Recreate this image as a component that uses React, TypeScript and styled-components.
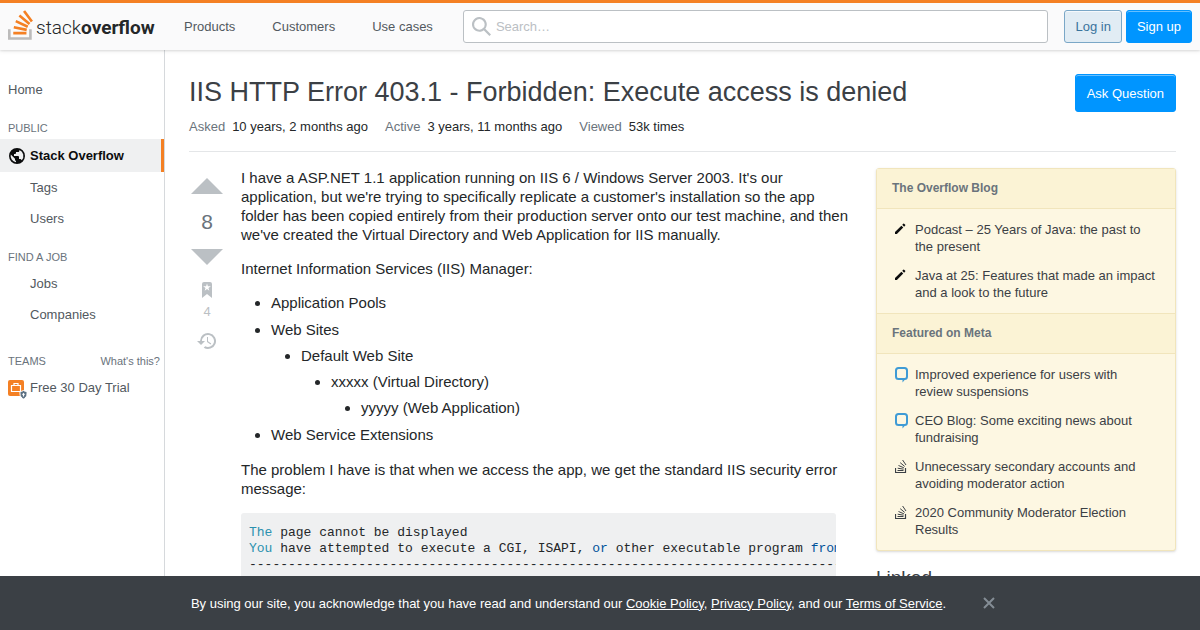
import React from "react";
import styled, { createGlobalStyle, css } from "styled-components";

const sans = `"Liberation Sans", Arial, sans-serif`;
const mono = `"Liberation Mono", "Courier New", monospace`;

const GlobalStyle = createGlobalStyle`
  *, *::before, *::after { box-sizing: border-box; }
  body {
    margin: 0;
    background: #fff;
    color: #242729;
    font-family: ${sans};
    font-size: 13px;
    line-height: 17px;
  }
  a { color: inherit; text-decoration: none; }
  svg { display: block; flex: none; }
  button { font-family: inherit; cursor: pointer; }
`;

const Page = styled.div`
  display: flex;
  flex-direction: column;
  min-height: 100vh;
`;

const TopBar = styled.header`
  position: sticky;
  top: 0;
  z-index: 10;
  display: flex;
  align-items: center;
  height: 50px;
  padding: 0 8px;
  background: #fafafb;
  border-top: 3px solid #f48024;
  box-shadow: 0 1px 2px rgba(12, 13, 14, 0.1), 0 1px 5px rgba(12, 13, 14, 0.08);
`;

const Logo = styled.a`
  display: flex;
  align-items: center;
  gap: 3px;
  width: 160px;
  padding-bottom: 3px;
  font-family: Roboto, ${sans};
  font-size: 19px;
  font-weight: 300;
  line-height: 24px;
  color: #242729;
  strong { font-weight: 700; }
`;

const LogoText = styled.span`
  padding-top: 5px;
  white-space: nowrap;
`;

const TopNav = styled.nav`
  display: flex;
  gap: 5px;
  a { padding: 8px 16px; color: #525960; white-space: nowrap; }
`;

const SearchForm = styled.form`
  display: flex;
  align-items: center;
  flex: 1;
  gap: 5px;
  height: 33px;
  margin: 0 16px 0 14px;
  padding: 0 8px;
  background: #fff;
  border: 1px solid #bbc0c4;
  border-radius: 3px;
  color: #bbc0c4;
`;

const SearchInput = styled.input`
  flex: 1;
  min-width: 0;
  padding: 0;
  border: 0;
  outline: 0;
  background: transparent;
  font: 13px/17px ${sans};
  &::placeholder { color: #bbc0c4; opacity: 1; }
`;

const Actions = styled.div`
  display: flex;
  gap: 4px;
`;

const Button = styled.button<{ $kind: "filled" | "primary"; $tall?: boolean }>`
  flex: none;
  height: ${(p) => (p.$tall ? 38 : 33)}px;
  padding: 0 ${(p) => (p.$tall ? 11 : 10)}px;
  border-radius: 3px;
  font-size: 13px;
  line-height: 17px;
  white-space: nowrap;
  ${(p) =>
    p.$kind === "primary"
      ? css`
          color: #fff;
          background: #0095ff;
          border: 1px solid #0095ff;
          box-shadow: inset 0 1px 0 rgba(255, 255, 255, 0.4);
        `
      : css`
          color: #39739d;
          background: #e1ecf4;
          border: 1px solid #7aa7c7;
          box-shadow: inset 0 1px 0 rgba(255, 255, 255, 0.7);
        `}
`;

const Body = styled.div`
  display: flex;
  flex: 1;
`;

const SideNav = styled.nav`
  flex: none;
  width: 165px;
  padding-top: 24px;
  border-right: 1px solid #d6d9dc;
  color: #525960;
`;

const NavHeading = styled.div<{ $far?: boolean }>`
  display: flex;
  justify-content: space-between;
  margin: ${(p) => (p.$far ? 23 : 15)}px 0 3px;
  padding: 0 4px 0 8px;
  font-size: 11px;
  line-height: 16px;
  color: #6a737c;
`;

const NavLink = styled.a<{ $indent?: boolean; $active?: boolean }>`
  display: flex;
  align-items: center;
  gap: 4px;
  height: 31px;
  padding-left: ${(p) => (p.$indent ? 30 : 8)}px;
  ${(p) =>
    p.$active &&
    css`
      height: 33px;
      background: #eff0f1;
      border-right: 3px solid #f48024;
      color: #0c0d0e;
      font-weight: 700;
    `}
`;

const Content = styled.main`
  flex: 1;
  min-width: 0;
  padding: 24px 24px 0;
`;

const QuestionHeader = styled.div`
  display: flex;
  justify-content: space-between;
  align-items: flex-start;
`;

const Title = styled.h1`
  margin: 0;
  font-size: 27px;
  font-weight: 400;
  line-height: 36px;
  color: #3b4045;
`;

const Stats = styled.dl`
  display: flex;
  gap: 17px;
  margin: 6px 0 16px;
  padding-bottom: 16px;
  border-bottom: 1px solid #e4e6e8;
  div { display: flex; gap: 7px; }
  dt { color: #6a737c; }
  dd { margin: 0; }
`;

const Columns = styled.div`
  display: flex;
  gap: 40px;
`;

const Post = styled.article`
  display: flex;
  flex: 1;
  min-width: 0;
  gap: 16px;
`;

const Votes = styled.div`
  display: flex;
  flex-direction: column;
  align-items: center;
  flex: none;
  width: 36px;
  color: #bbc0c4;
`;

const IconButton = styled.button`
  display: block;
  padding: 0;
  border: 0;
  background: none;
  color: inherit;
`;

const Score = styled.span`
  font-size: 21px;
  line-height: 35px;
  color: #6a737c;
`;

const Bookmark = styled(IconButton)`
  display: flex;
  flex-direction: column;
  align-items: center;
  gap: 4px;
  padding: 6px 0 12px;
  font-size: 13px;
  line-height: 17px;
`;

const Prose = styled.div`
  flex: 1;
  min-width: 0;
  font-size: 15px;
  line-height: 19px;
  p { margin: 0 -16px 15px 0; }
`;

const List = styled.ul`
  margin: 0 0 16px;
  padding-left: 30px;
  list-style: disc;
  li + li { margin-top: 8px; }
  ul { margin: 7px 0 0; }
`;

const Code = styled.pre`
  margin: 0;
  padding: 12px 8px;
  overflow: hidden;
  border-radius: 3px;
  background: #eff0f1;
  font-family: ${mono};
  font-size: 13px;
  line-height: 16px;
  color: #242729;
`;

const CodeWord = styled.span<{ $type?: boolean }>`
  color: ${(p) => (p.$type ? "#2b91af" : "#00529a")};
`;

const Aside = styled.aside`
  flex: none;
  width: 300px;
`;

const Card = styled.div`
  border: 1px solid #f1e5bc;
  border-radius: 3px;
  background: #fdf7e2;
  box-shadow: 0 1px 2px rgba(12, 13, 14, 0.1), 0 1px 4px rgba(12, 13, 14, 0.06);
  color: #3b4045;
`;

const CardHeading = styled.h2`
  margin: 0;
  padding: 11px 15px;
  border-bottom: 1px solid #f1e5bc;
  background: #fbf3d5;
  font-size: 12px;
  line-height: 17px;
  color: #6a737c;
  ul + & { border-top: 1px solid #f1e5bc; }
`;

const CardList = styled.ul`
  display: grid;
  gap: 12px;
  margin: 0;
  padding: 12px 18px;
  list-style: none;
`;

const CardItem = styled.li`
  display: grid;
  grid-template-columns: 14px 1fr;
  gap: 6px;
`;

const Linked = styled.h2`
  margin: 15px 0 0;
  font-size: 19px;
  font-weight: 400;
  line-height: 24px;
  color: #3b4045;
`;

const CookieBar = styled.div`
  position: fixed;
  right: 0;
  bottom: 0;
  left: 0;
  z-index: 20;
  display: flex;
  align-items: center;
  justify-content: center;
  gap: 23px;
  height: 54px;
  background: #3b4045;
  color: #fff;
  a { text-decoration: underline; }
`;

const Close = styled(IconButton)`
  display: flex;
  justify-content: center;
  width: 40px;
  color: #848d95;
`;

const LogoIcon = () => (
  <svg width="25" height="30" viewBox="22.6 14.9 73.2 86.6">
    <path fill="#bcbbbb" d="M84.4 93.8V70.6h7.7v30.9H22.6V70.6h7.7v23.2z" />
    <path
      fill="#f48024"
      d="M38.8 68.4l37.8 7.9 1.6-7.6-37.8-7.9-1.6 7.6zM43.8 50.4l35 16.3 3.2-7-35-16.4-3.2 7.1zM53.5 33.2l29.7 24.7 4.9-5.9-29.7-24.7-4.9 5.9zM72.7 14.9l-6.2 4.6 23 31 6.2-4.6-23-31zM38 86h38.6v-7.7H38V86z"
    />
  </svg>
);

const StackIcon = () => (
  <svg width="14" height="16" viewBox="0 0 14 16" fill="none" stroke="#3b4045" strokeWidth="1">
    <path d="M.5 10v4.500h10V10" strokeWidth="1.200" />
    <path d="M2.500 12.500h6M2.700 10.200l5.900 1M3.500 7.500l5.400 2.300M5.200 4.700l4.500 3.700M7.600 2l3.400 5" />
  </svg>
);

const PencilIcon = () => (
  <svg width="14" height="14" viewBox="2 -1 14 14" fill="#0c0d0e">
    <path d="M11.1 1.71l1.13 1.12c.2.2.2.51 0 .71L11.1 4.7 9.21 2.86l1.17-1.15c.2-.2.51-.2.71 0zM2 10.12l6.37-6.43 1.88 1.88L3.88 12H2v-1.88z" />
  </svg>
);

const MetaIcon = () => (
  <svg width="14" height="17" viewBox="0 -1 14 17">
    <rect x="1" y="1" width="11" height="11" rx="2.500" fill="none" stroke="#3f9bd5" strokeWidth="2" />
    <path d="M6 12h4.500L7.500 15.500V13z" fill="#3f9bd5" />
  </svg>
);

const blogPosts = [
  "Podcast – 25 Years of Java: the past to the present",
  "Java at 25: Features that made an impact and a look to the future",
];

const metaPosts = [
  { icon: <MetaIcon />, text: "Improved experience for users with review suspensions" },
  { icon: <MetaIcon />, text: "CEO Blog: Some exciting news about fundraising" },
  { icon: <StackIcon />, text: "Unnecessary secondary accounts and avoiding moderator action" },
  { icon: <StackIcon />, text: "2020 Community Moderator Election Results" },
];

export default function App() {
  return (
    <Page>
      <GlobalStyle />
      <TopBar>
        <Logo href="#" aria-label="Stack Overflow">
          <LogoIcon />
          <LogoText>
            stack<strong>overflow</strong>
          </LogoText>
        </Logo>
        <TopNav>
          <a href="#">Products</a>
          <a href="#">Customers</a>
          <a href="#">Use cases</a>
        </TopNav>
        <SearchForm role="search">
          <svg width="19" height="19" viewBox="0 0 18 18" fill="currentColor">
            <path d="M18 16.500l-5.140-5.180h-.35a7 7 0 10-1.190 1.190v.35L16.500 18l1.500-1.500zM12 7A5 5 0 112 7a5 5 0 0110 0z" />
          </svg>
          <SearchInput type="text" placeholder="Search…" aria-label="Search" />
        </SearchForm>
        <Actions>
          <Button $kind="filled">Log in</Button>
          <Button $kind="primary">Sign up</Button>
        </Actions>
      </TopBar>

      <Body>
        <SideNav>
          <NavLink href="#">Home</NavLink>
          <NavHeading>PUBLIC</NavHeading>
          <NavLink href="#" $active>
            <svg width="18" height="18" viewBox="0 0 18 18" fill="currentColor">
              <path d="M9 1a8 8 0 100 16A8 8 0 009 1zM8 15.320a6.460 6.460 0 01-4.300-2.740 6.460 6.460 0 01-.93-5.010L7 11.680v.8c0 .88.12 1.320 1 1.320v1.520zm5.720-2c-.2-.66-1-1.320-1.720-1.320h-1v-2c0-.44-.56-1-1-1H6V7h1c.44 0 1-.56 1-1V5h2c.88 0 1.400-.72 1.400-1.600v-.33a6.450 6.450 0 013.830 4.510 6.450 6.450 0 01-1.510 5.730v.01z" />
            </svg>
            Stack Overflow
          </NavLink>
          <NavLink href="#" $indent>Tags</NavLink>
          <NavLink href="#" $indent>Users</NavLink>
          <NavHeading>FIND A JOB</NavHeading>
          <NavLink href="#" $indent>Jobs</NavLink>
          <NavLink href="#" $indent>Companies</NavLink>
          <NavHeading $far>
            TEAMS <a href="#">What's this?</a>
          </NavHeading>
          <NavLink href="#">
            <svg width="18" height="18" viewBox="0 0 18 18" overflow="visible">
              <rect y="1" width="16" height="16" rx="2" fill="#f48024" />
              <path d="M3.500 6.500h9v6h-9zM6 6V4.500h4V6" fill="none" stroke="#fff" strokeWidth="1.200" />
              <path
                d="M12 12.500c1.200 0 2.500-.3 3.500-1 1 .7 2.300 1 3.500 1V15c0 2.500-1.500 4-3.500 5-2-1-3.500-2.500-3.500-5z"
                fill="#5b7083"
                stroke="#fff"
              />
              <path d="M14.900 17.500v-1.700h-1.100l1.700-2 1.700 2h-1.100v1.700z" fill="#fff" />
            </svg>
            Free 30 Day Trial
          </NavLink>
        </SideNav>

        <Content>
          <QuestionHeader>
            <Title>IIS HTTP Error 403.1 - Forbidden: Execute access is denied</Title>
            <Button $kind="primary" $tall>Ask Question</Button>
          </QuestionHeader>
          <Stats>
            <div><dt>Asked</dt><dd>10 years, 2 months ago</dd></div>
            <div><dt>Active</dt><dd>3 years, 11 months ago</dd></div>
            <div><dt>Viewed</dt><dd>53k times</dd></div>
          </Stats>

          <Columns>
            <Post>
              <Votes>
                <IconButton aria-label="Up vote">
                  <svg width="36" height="36" viewBox="0 0 36 36" fill="currentColor">
                    <path d="M2 26h32L18 10 2 26z" />
                  </svg>
                </IconButton>
                <Score>8</Score>
                <IconButton aria-label="Down vote">
                  <svg width="36" height="36" viewBox="0 0 36 36" fill="currentColor">
                    <path d="M2 10h32L18 26 2 10z" />
                  </svg>
                </IconButton>
                <Bookmark aria-label="Bookmark">
                  <svg width="18" height="18" viewBox="0 0 18 18" fill="currentColor" fillRule="evenodd">
                    <path d="M6 1a2 2 0 00-2 2v14l5-4 5 4V3a2 2 0 00-2-2H6zm3.900 4.230h3l-2.450 1.700.9 2.870L9 8.090l-2.350 1.710.9-2.870-2.450-1.700h3L9 2.460l.9 2.770z" />
                  </svg>
                  4
                </Bookmark>
                <IconButton aria-label="Show activity">
                  <svg width="20" height="18" viewBox="0 0 20 18" fill="currentColor">
                    <path d="M3 9a8 8 0 113.730 6.770L8.200 14.300A6 6 0 105 9l3.010-.01-4 4-4-4h3L3 9zm7-4h1.010L11 9.360l3.220 2.100-.6.93L10 10V5z" />
                  </svg>
                </IconButton>
              </Votes>
              <Prose>
                <p>
                  I have a ASP.NET 1.1 application running on IIS 6 / Windows Server 2003. It's our
                  application, but we're trying to specifically replicate a customer's installation so the app
                  folder has been copied entirely from their production server onto our test machine, and then
                  we've created the Virtual Directory and Web Application for IIS manually.
                </p>
                <p>Internet Information Services (IIS) Manager:</p>
                <List>
                  <li>Application Pools</li>
                  <li>
                    Web Sites
                    <List>
                      <li>
                        Default Web Site
                        <List>
                          <li>
                            xxxxx (Virtual Directory)
                            <List>
                              <li>yyyyy (Web Application)</li>
                            </List>
                          </li>
                        </List>
                      </li>
                    </List>
                  </li>
                  <li>Web Service Extensions</li>
                </List>
                <p>The problem I have is that when we access the app, we get the standard IIS security error message:</p>
                <Code>
                  <CodeWord $type>The</CodeWord>
                  {" page cannot be displayed\n"}
                  <CodeWord $type>You</CodeWord>
                  {" have attempted to execute a CGI, ISAPI, "}
                  <CodeWord>or</CodeWord>
                  {" other executable program "}
                  <CodeWord>from</CodeWord>
                  {"\n"}
                  {"-".repeat(78)}
                </Code>
              </Prose>
            </Post>

            <Aside>
              <Card>
                <CardHeading>The Overflow Blog</CardHeading>
                <CardList>
                  {blogPosts.map((text) => (
                    <CardItem key={text}>
                      <PencilIcon />
                      <a href="#">{text}</a>
                    </CardItem>
                  ))}
                </CardList>
                <CardHeading>Featured on Meta</CardHeading>
                <CardList>
                  {metaPosts.map(({ icon, text }) => (
                    <CardItem key={text}>
                      {icon}
                      <a href="#">{text}</a>
                    </CardItem>
                  ))}
                </CardList>
              </Card>
              <Linked>Linked</Linked>
            </Aside>
          </Columns>
        </Content>
      </Body>

      <CookieBar>
        <span>
          By using our site, you acknowledge that you have read and understand our <a href="#">Cookie Policy</a>,{" "}
          <a href="#">Privacy Policy</a>, and our <a href="#">Terms of Service</a>.
        </span>
        <Close aria-label="Dismiss">
          <svg width="14" height="14" viewBox="0 0 14 14" fill="none" stroke="currentColor" strokeWidth="2">
            <path d="M2 2l10 10M12 2L2 12" />
          </svg>
        </Close>
      </CookieBar>
    </Page>
  );
}
